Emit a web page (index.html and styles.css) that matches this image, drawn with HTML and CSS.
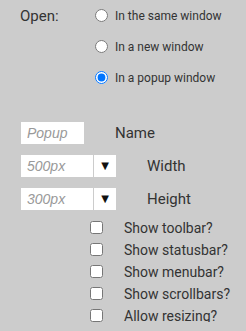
FILE: index.html
```html
<!DOCTYPE html>
<html lang="en">
  <head>
    <meta charset="UTF-8" />
    <title>Open options</title>
    <link rel="stylesheet" href="styles.css">
  </head>
  <body>
    <form class="options">
      <!-- where the link opens -->
      <div class="open-row">
        <span class="open-label">Open:</span>
        <div class="radios">
          <label class="radio"><input type="radio" name="open" /> In the same window</label>
          <label class="radio"><input type="radio" name="open" /> In a new window</label>
          <label class="radio"><input type="radio" name="open" checked /> In a popup window</label>
        </div>
      </div>

      <!-- popup settings -->
      <div class="field-row">
        <input class="text-input" type="text" placeholder="Popup" />
        <span class="field-label">Name</span>
      </div>
      <div class="field-row">
        <div class="combo">
          <input type="text" placeholder="500px" />
          <span class="combo-arrow">&#9660;</span>
        </div>
        <span class="field-label">Width</span>
      </div>
      <div class="field-row">
        <div class="combo">
          <input type="text" placeholder="300px" />
          <span class="combo-arrow">&#9660;</span>
        </div>
        <span class="field-label">Height</span>
      </div>

      <div class="checks">
        <label class="check"><input type="checkbox" /> Show toolbar?</label>
        <label class="check"><input type="checkbox" /> Show statusbar?</label>
        <label class="check"><input type="checkbox" /> Show menubar?</label>
        <label class="check"><input type="checkbox" /> Show scrollbars?</label>
        <label class="check"><input type="checkbox" /> Allow resizing?</label>
      </div>
    </form>
  </body>
</html>
```

FILE: styles.css
```css
body {
  margin: 0;
  background: #cccccc;
  color: #333333;
  font-family: Roboto, "Liberation Sans", sans-serif;
}

.options {
  padding: 9px 0 0 20px;
}

/* radio group */
.open-row {
  display: flex;
}

.open-label {
  width: 75px;
  font-size: 15px;
  line-height: 14px;
}

.radios {
  display: flex;
  flex-direction: column;
  gap: 18px;
}

.radio {
  display: flex;
  align-items: center;
  gap: 7px;
  font-size: 12px;
  height: 13px;
}

.radio input {
  margin: 0;
  width: 13px;
  height: 13px;
}

/* text fields */
.field-row {
  display: flex;
  align-items: center;
  margin-left: 1px;
  margin-bottom: 11px;
}

.open-row + .field-row {
  margin-top: 38px;
}

.text-input,
.combo input {
  box-sizing: border-box;
  height: 22px;
  border: none;
  outline: none;
  padding: 0 6px;
  background: #fff;
  font-family: "Liberation Sans", Arial, sans-serif;
  font-size: 14px;
  font-style: italic;
}

.text-input {
  width: 63px;
}

::placeholder {
  color: #999999;
}

.combo {
  display: flex;
  background: #fff;
  height: 22px;
}

.combo input {
  width: 73px;
  border-right: 1px solid #cccccc;
}

.combo-arrow {
  width: 22px;
  text-align: center;
  font-family: "DejaVu Sans", sans-serif;
  font-size: 10px;
  line-height: 22px;
  color: #111;
}

.field-label {
  margin-left: 31px;
  font-size: 15px;
}

/* checkbox list */
.checks {
  display: flex;
  flex-direction: column;
  gap: 9px;
  margin-left: 70px;
  margin-top: 7px;
}

.check {
  display: flex;
  align-items: center;
  gap: 21px;
  font-size: 14px;
  height: 13px;
}

.check input {
  margin: 0;
  width: 13px;
  height: 13px;
}
```
